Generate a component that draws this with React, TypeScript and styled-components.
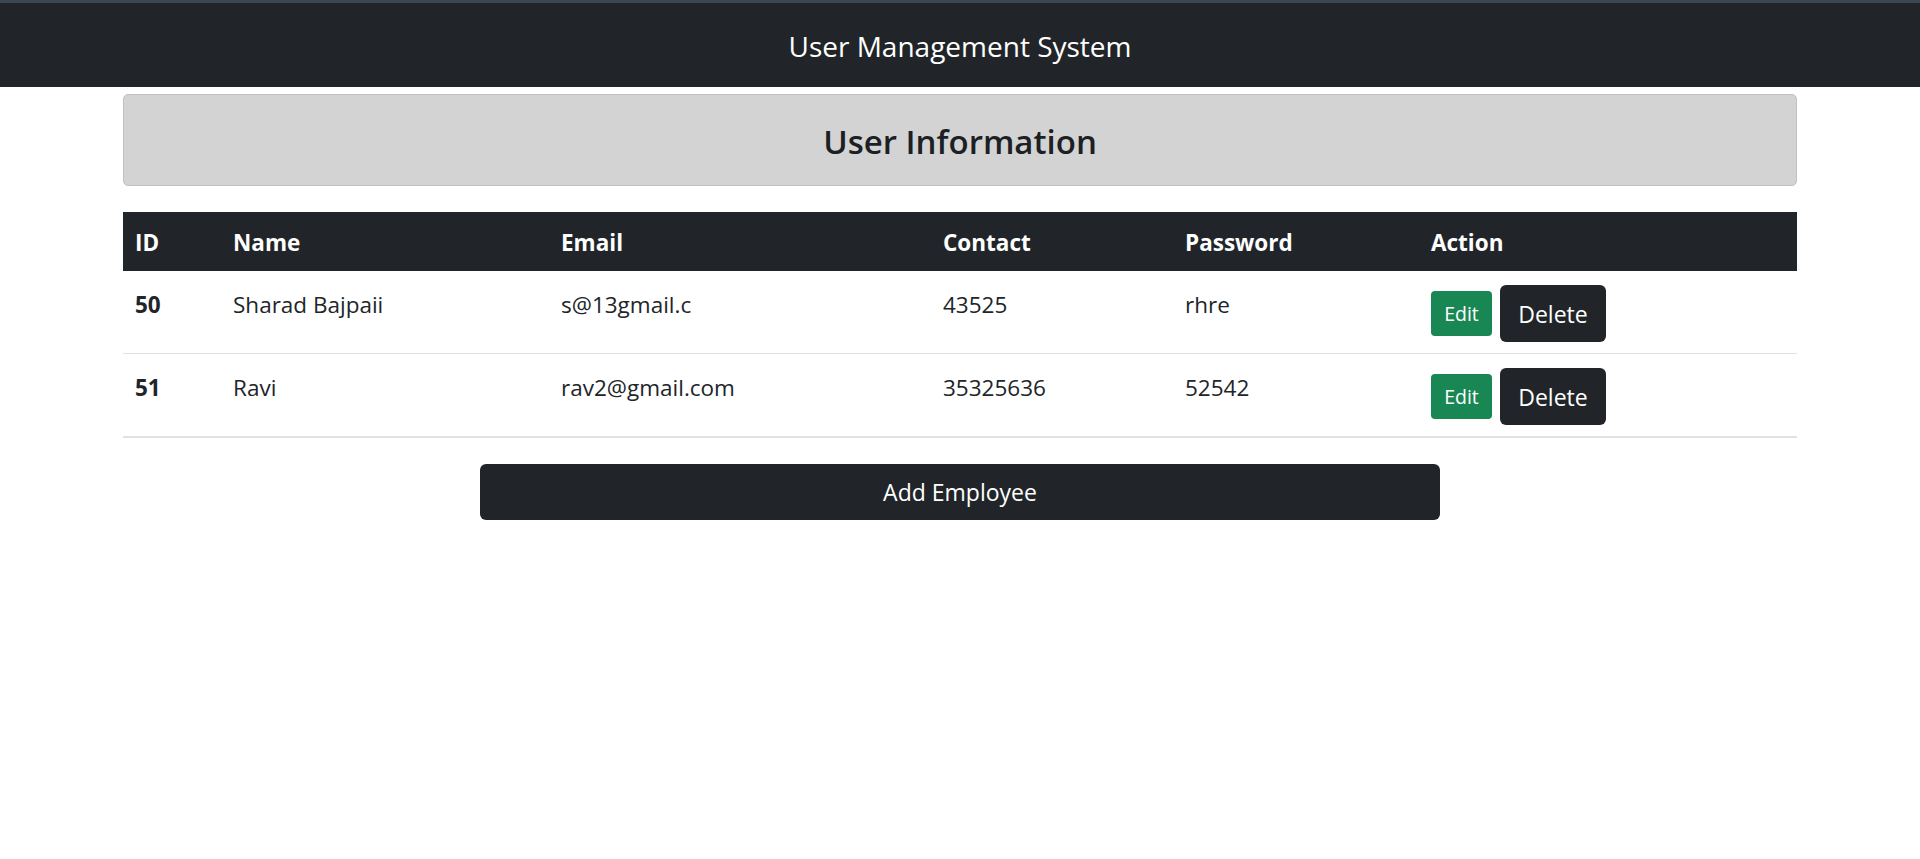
import React from "react";
import styled, { createGlobalStyle } from "styled-components";

const GlobalStyle = createGlobalStyle`
  html, body { margin: 0; padding: 0; background: #ffffff; }
  body {
    font-family: "Open Sans", "Noto Sans", "Liberation Sans", sans-serif;
    color: #212529;
  }
`;

const Navbar = styled.header`
  height: 87px;
  box-sizing: border-box;
  border-top: 3px solid #3b4751;
  background: #212529;
  display: flex;
  align-items: center;
  justify-content: center;
  padding-top: 4px;
`;

const NavTitle = styled.h1`
  margin: 0;
  font-size: 28px;
  font-weight: 400;
  color: #ffffff;
  line-height: 1.2;
`;

const Container = styled.main`
  padding: 7px 123px 0;
  display: flex;
  flex-direction: column;
`;

const Banner = styled.div`
  height: 92px;
  box-sizing: border-box;
  background: #d3d3d3;
  border: 1px solid #c2c2c2;
  border-radius: 5px;
  display: flex;
  align-items: center;
  justify-content: center;
  padding-top: 4px;
`;

const BannerTitle = styled.h2`
  margin: 0;
  font-size: 33px;
  font-weight: 600;
  color: #1c1f23;
  line-height: 1.2;
`;

const Table = styled.table`
  margin-top: 26px;
  width: 100%;
  border-collapse: collapse;
  table-layout: fixed;
  font-size: 22.5px;
`;

const HeadCell = styled.th`
  background: #212529;
  color: #ffffff;
  font-weight: 700;
  text-align: left;
  padding: 16px 12px 13px;
  line-height: 30px;
`;

const Row = styled.tr<{ $last?: boolean }>`
  border-bottom: ${(p) => (p.$last ? "2px" : "1px")} solid #dee2e6;
`;

const Cell = styled.td<{ $bold?: boolean }>`
  vertical-align: top;
  padding: 19px 12px;
  line-height: 30px;
  font-weight: ${(p) => (p.$bold ? 700 : 400)};
  color: #212529;
`;

const ActionCell = styled.td`
  vertical-align: top;
  padding: 14px 12px 11px;
`;

const Actions = styled.div`
  display: flex;
  align-items: center;
  gap: 8px;
`;

const Button = styled.button<{ $variant: "success" | "dark"; $size: "sm" | "lg" }>`
  border: none;
  cursor: pointer;
  font-family: inherit;
  color: #ffffff;
  background: ${(p) => (p.$variant === "success" ? "#198754" : "#212529")};
  font-size: ${(p) => (p.$size === "sm" ? "19.5px" : "23px")};
  height: ${(p) => (p.$size === "sm" ? "45px" : "57px")};
  width: ${(p) => (p.$size === "sm" ? "61px" : "106px")};
  border-radius: ${(p) => (p.$size === "sm" ? "4px" : "6px")};
  padding: 0;
  display: inline-flex;
  align-items: center;
  justify-content: center;
`;

const AddButton = styled.button`
  align-self: center;
  margin-top: 26px;
  width: 960px;
  height: 56px;
  border: none;
  border-radius: 6px;
  background: #212529;
  color: #ffffff;
  font-family: inherit;
  font-size: 23px;
  cursor: pointer;
`;

const users = [
  { id: 50, name: "Sharad Bajpaii", email: "s@13gmail.c", contact: "43525", password: "rhre" },
  { id: 51, name: "Ravi", email: "rav2@gmail.com", contact: "35325636", password: "52542" },
];

const colWidths = [98, 328, 382, 242, 246, 378];

export default function App() {
  return (
    <>
      <GlobalStyle />
      <Navbar>
        <NavTitle>User Management System</NavTitle>
      </Navbar>
      <Container>
        <Banner>
          <BannerTitle>User Information</BannerTitle>
        </Banner>
        <Table>
          <colgroup>
            {colWidths.map((w, i) => (
              <col key={i} style={{ width: w }} />
            ))}
          </colgroup>
          <thead>
            <tr>
              <HeadCell>ID</HeadCell>
              <HeadCell>Name</HeadCell>
              <HeadCell>Email</HeadCell>
              <HeadCell>Contact</HeadCell>
              <HeadCell>Password</HeadCell>
              <HeadCell>Action</HeadCell>
            </tr>
          </thead>
          <tbody>
            {users.map((u, i) => (
              <Row key={u.id} $last={i === users.length - 1}>
                <Cell $bold>{u.id}</Cell>
                <Cell>{u.name}</Cell>
                <Cell>{u.email}</Cell>
                <Cell>{u.contact}</Cell>
                <Cell>{u.password}</Cell>
                <ActionCell>
                  <Actions>
                    <Button $variant="success" $size="sm">Edit</Button>
                    <Button $variant="dark" $size="lg">Delete</Button>
                  </Actions>
                </ActionCell>
              </Row>
            ))}
          </tbody>
        </Table>
        <AddButton>Add Employee</AddButton>
      </Container>
    </>
  );
}
